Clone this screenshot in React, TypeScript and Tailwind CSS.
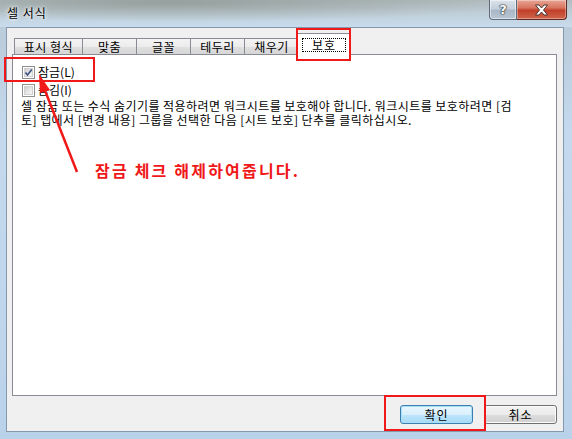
import React from "react";

const FONT = "font-['Noto_Sans_CJK_KR','Noto_Sans',sans-serif]";

function Tab({ label, w }: { label: string; w: string }) {
  return (
    <div
      className={`${w} h-[16px] border border-b-0 border-[#898c95] bg-[linear-gradient(180deg,#f4f4f4_0%,#ececec_50%,#e0e0e0_51%,#d6d6d6_100%)] flex items-center justify-center text-[12px] leading-[12px] text-black tracking-[0.5px] -ml-px first:ml-0`}
    >
      {label}
    </div>
  );
}

function CheckBox({ checked }: { checked: boolean }) {
  return (
    <div className="w-[13px] h-[13px] border border-[#8e8f8f] bg-white p-px shrink-0">
      <div className="w-full h-full bg-[linear-gradient(135deg,#cfcfcf_0%,#e9e9e9_60%,#f7f7f7_100%)] border border-[#d0d0d0] relative">
        {checked && (
          <svg viewBox="0 0 9 9" className="absolute -left-px -top-px w-[9px] h-[9px]">
            <path d="M1.5 4.5 L3.5 7 L7.8 1.5" fill="none" stroke="#3b4f87" strokeWidth="1.6" />
          </svg>
        )}
      </div>
    </div>
  );
}

function DlgButton({ label, def }: { label: string; def?: boolean }) {
  return (
    <div
      className={`w-[73px] h-[19px] rounded-[3px] border ${
        def
          ? "border-[#3c7fb1] shadow-[inset_0_0_0_1px_#a9def7] bg-[linear-gradient(180deg,#eaf6fd_0%,#d9f0fc_50%,#bee6fd_51%,#a7d9f5_100%)]"
          : "border-[#707070] shadow-[inset_0_0_0_1px_#fcfcfc] bg-[linear-gradient(180deg,#f2f2f2_0%,#ebebeb_50%,#dddddd_51%,#cfcfcf_100%)]"
      } flex items-center justify-center text-[12px] leading-[12px] text-black tracking-[1px]`}
    >
      {label}
    </div>
  );
}

export default function App() {
  return (
    <div
      className={`relative w-[572px] h-[439px] overflow-hidden flex flex-col bg-[linear-gradient(180deg,#b8c8d4_0%,#c4d9ee_30%,#c0d6ec_70%,#b9d2ea_100%)] ${FONT}`}
    >
      {/* title bar */}
      <div className="relative h-[27px] shrink-0 flex items-start justify-between bg-[radial-gradient(ellipse_60%_70%_at_30%_10%,rgba(140,150,145,0.75),rgba(140,150,145,0)_100%),linear-gradient(180deg,#b2bcbf_0%,#bfcdd6_45%,#c8dcee_100%)]">
        <div className="pl-[7px] pt-[6px] text-[12px] leading-[14px] text-black tracking-[1px] [text-shadow:0_0_6px_#ffffff,0_0_3px_#ffffff]">
          셀 서식
        </div>
        <div className="flex mr-[5px]">
          <div className="w-[28px] h-[20px] border border-[#5f6b7a] border-t-0 rounded-bl-[4px] bg-[linear-gradient(180deg,#dbe2ea_0%,#c5d0dc_45%,#a9b7c6_55%,#b9c6d2_100%)] shadow-[inset_0_0_0_1px_rgba(255,255,255,0.5)] flex items-center justify-center">
            <span className="text-white font-bold text-[13px] leading-[13px] font-['DejaVu_Sans',sans-serif] [text-shadow:0_0_1px_#222,0_0_1px_#222,0_0_2px_#333]">
              ?
            </span>
          </div>
          <div className="w-[50px] h-[20px] border border-[#5e2b22] border-t-0 border-l-0 rounded-br-[4px] bg-[linear-gradient(180deg,#e8a696_0%,#d87560_40%,#c2402a_55%,#d0654c_100%)] shadow-[inset_0_0_0_1px_rgba(255,255,255,0.35)] flex items-center justify-center">
            <svg viewBox="0 0 14 12" className="w-[15px] h-[12px]">
              <path
                d="M1 1 H4.5 L7 4 L9.5 1 H13 L9 6 L13 11 H9.5 L7 8 L4.5 11 H1 L5 6 Z"
                fill="#ffffff"
                stroke="#3a2a28"
                strokeWidth="0.9"
                strokeLinejoin="round"
              />
            </svg>
          </div>
        </div>
      </div>

      {/* client area */}
      <div className="flex-1 ml-[6px] mr-[8px] mb-[7px] bg-[#f0f0f0] border border-[#8499ae] flex flex-col pl-[5px] pr-[6px] pt-[5px]">
        {/* tabs */}
        <div className="h-[21px] flex items-end pl-[2px] relative z-10">
          <Tab label="표시 형식" w="w-[69px]" />
          <Tab label="맞춤" w="w-[55px]" />
          <Tab label="글꼴" w="w-[55px]" />
          <Tab label="테두리" w="w-[55px]" />
          <Tab label="채우기" w="w-[55px]" />
          <div className="-ml-[3px] w-[54px] h-[22px] -mb-px border border-b-0 border-[#898c95] bg-white flex items-start justify-center pt-[4px] pl-[2px]">
            <span className="w-[44px] h-[14px] border border-dotted border-black text-[12px] leading-[12px] text-center text-black tracking-[1px]">
              보호
            </span>
          </div>
        </div>

        {/* panel */}
        <div className="h-[342px] border border-[#898c95] bg-white pl-[8px] pt-[8px]">
          <div className="flex items-center h-[18px] gap-[3px] ml-px">
            <CheckBox checked />
            <span className="text-[12px] leading-[12px] text-black">잠금(L)</span>
          </div>
          <div className="flex items-center h-[18px] gap-[3px] ml-px">
            <CheckBox checked={false} />
            <span className="text-[12px] leading-[12px] text-black">숨김(I)</span>
          </div>
          <div className="text-[12px] leading-[14px] text-black whitespace-nowrap tracking-[0.45px]">
            <div>셀 잠금 또는 수식 숨기기를 적용하려면 워크시트를 보호해야 합니다. 워크시트를 보호하려면 [검</div>
            <div>토] 탭에서 [변경 내용] 그룹을 선택한 다음 [시트 보호] 단추를 클릭하십시오.</div>
          </div>
        </div>

        {/* buttons */}
        <div className="pt-[9px] flex justify-end gap-[11px]">
          <DlgButton label="확인" def />
          <DlgButton label="취소" />
        </div>
      </div>

      {/* annotations */}
      <div className="absolute left-[4px] top-[57px] w-[91px] h-[25px] border-2 border-[#f01818]" />
      <div className="absolute left-[296px] top-[28px] w-[55px] h-[33px] border-2 border-[#f01818] z-20" />
      <div className="absolute left-[384px] top-[395px] w-[102px] h-[36px] border-2 border-[#f01818]" />
      <svg className="absolute left-0 top-0 w-[572px] h-[439px] pointer-events-none" viewBox="0 0 572 439">
        <line x1="77" y1="172" x2="44" y2="88" stroke="#f01818" strokeWidth="2.5" />
        <polygon points="39,74 50,90 40,93" fill="#f01818" />
      </svg>
      <div className="absolute left-[95px] top-[161px] text-[16px] leading-[18px] font-bold text-[#f01818] tracking-[2.2px] whitespace-nowrap">
        잠금 체크 해제하여줍니다.
      </div>
    </div>
  );
}
